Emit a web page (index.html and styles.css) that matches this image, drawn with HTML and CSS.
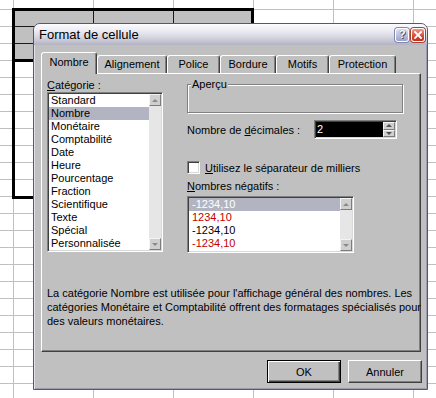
FILE: index.html
```html
<!DOCTYPE html>
<html lang="fr">
<head>
<meta charset="utf-8">
<title>Format de cellule</title>
<link rel="stylesheet" href="styles.css">
</head>
<body>
<div class="sel sel-shaded"></div>
<div class="sel sel-range"></div>

<div class="dialog">
  <div class="titlebar">
    <span class="title">Format de cellule</span>
    <div class="caption-buttons">
      <span class="cap-btn cap-help">?</span>
      <span class="cap-btn cap-close"><svg width="8" height="8" viewBox="0 0 8 8"><path d="M1 1L7 7M7 1L1 7" stroke="#fff" stroke-width="1.8" stroke-linecap="square"/></svg></span>
    </div>
  </div>
  <div class="client">
    <div class="tabs">
      <div class="tab tab-nombre active">Nombre</div>
      <div class="tab tab-align">Alignement</div>
      <div class="tab tab-police">Police</div>
      <div class="tab tab-bordure">Bordure</div>
      <div class="tab tab-motifs">Motifs</div>
      <div class="tab tab-protect">Protection</div>
    </div>
    <div class="panel">
      <div class="columns">
        <div class="col-left">
          <div class="label"><u>C</u>atégorie :</div>
          <div class="listbox list-cat">
            <ul class="items">
              <li>Standard</li>
              <li class="selected">Nombre</li>
              <li>Monétaire</li>
              <li>Comptabilité</li>
              <li>Date</li>
              <li>Heure</li>
              <li>Pourcentage</li>
              <li>Fraction</li>
              <li>Scientifique</li>
              <li>Texte</li>
              <li>Spécial</li>
              <li>Personnalisée</li>
            </ul>
            <div class="vscroll">
              <span class="sb-btn sb-up"></span>
              <span class="sb-track"></span>
              <span class="sb-btn sb-down"></span>
            </div>
          </div>
        </div>
        <div class="col-right">
          <div class="groupbox"><span class="legend">Aperçu</span></div>
          <div class="dec-row">
            <span>Nombre de <u>d</u>écimales :</span>
            <div class="spin">
              <div class="spin-field">2</div>
              <div class="spin-btns">
                <span class="spin-btn spin-up"></span>
                <span class="spin-btn spin-down"></span>
              </div>
            </div>
          </div>
          <div class="check-row">
            <span class="checkbox"></span>
            <span><u>U</u>tilisez le séparateur de milliers</span>
          </div>
          <div class="label neg-label"><u>N</u>ombres négatifs :</div>
          <div class="listbox list-neg">
            <ul class="items">
              <li class="selected sel-white">-1234,10</li>
              <li class="red">1234,10</li>
              <li>-1234,10</li>
              <li class="red">-1234,10</li>
            </ul>
            <div class="vscroll">
              <span class="sb-btn sb-up"></span>
              <span class="sb-track"></span>
              <span class="sb-btn sb-down"></span>
            </div>
          </div>
        </div>
      </div>
      <p class="desc">La catégorie Nombre est utilisée pour l'affichage général des nombres. Les<br>catégories Monétaire et Comptabilité offrent des formatages spécialisés pour<br>des valeurs monétaires.</p>
    </div>
    <div class="buttons">
      <button class="btn btn-default">OK</button>
      <button class="btn">Annuler</button>
    </div>
  </div>
</div>
</body>
</html>
```

FILE: styles.css
```css
* { box-sizing: border-box; }

html, body { margin: 0; padding: 0; }

body {
  width: 436px;
  height: 398px;
  overflow: hidden;
  position: relative;
  background-color: #fff;
  background-image:
    linear-gradient(to right, #c0c0c0 1px, transparent 1px),
    linear-gradient(to bottom, #c0c0c0 1px, transparent 1px);
  background-size: 80px 17px;
  background-position: 13px 9px;
  font-family: "Liberation Sans", Arial, sans-serif;
  font-size: 11px;
  color: #000;
}

/* spreadsheet selection overlays */
.sel {
  position: absolute;
  border: 3px solid #000;
}
.sel-shaded {
  left: 12px;
  top: 8px;
  width: 242px;
  height: 54px;
  background-color: #c0c0c0;
  background-image:
    linear-gradient(to right, #1a1a1a 1px, transparent 1px),
    linear-gradient(to bottom, #1a1a1a 1px, transparent 1px);
  background-size: 80px 17px;
  background-position: 78px 15px;
}
.sel-range {
  left: 12px;
  top: 59px;
  width: 242px;
  height: 140px;
}

/* dialog window */
.dialog {
  position: absolute;
  left: 33px;
  top: 23px;
  width: 395px;
  height: 367px;
  background: #c0c0c0;
  border: 1px solid #58586c;
  border-radius: 7px 7px 0 0;
  display: flex;
  flex-direction: column;
  box-shadow: inset 1px 0 0 #e2e2ea, inset -1px 0 0 #9c9cac, inset 0 -1px 0 #9c9cac;
}

.titlebar {
  flex: none;
  height: 21px;
  display: flex;
  align-items: center;
  justify-content: space-between;
  padding: 0 2px 0 5px;
  border-radius: 6px 6px 0 0;
  background: linear-gradient(#fdfdff 0%, #f0f0f5 25%, #dcdce6 55%, #c6c6d4 80%, #b2b2c4 100%);
}
.title {
  font-size: 13px;
  color: #000;
}
.caption-buttons {
  display: flex;
  gap: 2px;
}
.cap-btn {
  width: 14px;
  height: 14px;
  border-radius: 3px;
  border: 1px solid #fff;
  display: flex;
  align-items: center;
  justify-content: center;
}
.cap-help {
  background: linear-gradient(#dfe2f2, #9ba2c8);
  color: #fff;
  font-weight: bold;
  font-size: 11px;
  line-height: 1;
  text-shadow: 0 0 1px #4a5080, 1px 1px 0 #4a5080;
  box-shadow: 0 0 0 1px #8088b0;
}
.cap-close {
  background: linear-gradient(#ee9a88, #d24a36 60%, #c0301e);
  box-shadow: 0 0 0 1px #a84030;
}

.client {
  flex: 1;
  padding: 7px 5px 0 7px;
  display: flex;
  flex-direction: column;
}

/* tabs */
.tabs {
  display: flex;
  align-items: flex-end;
  height: 21px;
}
.tab {
  height: 18px;
  display: flex;
  align-items: center;
  justify-content: center;
  background: #c0c0c0;
  border-top: 1px solid #fff;
  border-left: 1px solid #fff;
  border-right: 1px solid #404040;
  border-radius: 3px 3px 0 0;
  box-shadow: inset -1px 0 0 #808080;
  padding-bottom: 1px;
}
.tab.active {
  height: 22px;
  margin-bottom: -1px;
  position: relative;
  z-index: 1;
  padding-bottom: 3px;
}
.tab-nombre { width: 56px; }
.tab-align { width: 70px; }
.tab-police { width: 53px; }
.tab-bordure { width: 56px; }
.tab-motifs { width: 53px; }
.tab-protect { width: 67px; }

.panel {
  width: 380px;
  height: 279px;
  flex: none;
  border-top: 1px solid #fff;
  border-left: 1px solid #fff;
  border-right: 1px solid #404040;
  border-bottom: 1px solid #404040;
  box-shadow: inset -1px -1px 0 #808080;
  padding: 5px 0 0 5px;
}

.columns {
  display: flex;
  gap: 24px;
}
.col-left {
  width: 116px;
}
.col-right {
  width: 216px;
  padding-top: 5px;
  display: flex;
  flex-direction: column;
}

.label {
  height: 13px;
  line-height: 13px;
  white-space: nowrap;
}

/* list boxes */
.listbox {
  display: flex;
  background: #fff;
  border: 1px solid;
  border-color: #808080 #fff #fff #808080;
  padding: 1px;
  box-shadow: inset 1px 1px 0 #404040, inset -1px -1px 0 #d8d8d8;
  overflow: hidden;
}
.list-cat {
  height: 160px;
}
.list-neg {
  width: 167px;
  height: 57px;
  margin-top: 3px;
}
.items {
  flex: 1;
  list-style: none;
  margin: 0;
  padding: 0;
  overflow: hidden;
}
.items li {
  height: 13px;
  line-height: 13px;
  padding-left: 2px;
  white-space: nowrap;
}
.list-neg .items li { padding-left: 3px; }
.items li.selected { background: #b3b4c1; }
.items li.sel-white { color: #fff; }
.items li.red { color: #c40000; }

.vscroll {
  width: 12px;
  flex: none;
  display: flex;
  flex-direction: column;
}
.sb-track {
  flex: 1;
  background: #e6e6e6;
}
.sb-btn {
  height: 12px;
  flex: none;
  background: #cfcfcf;
  border: 1px solid;
  border-color: #f4f4f4 #7c7c7c #7c7c7c #f4f4f4;
  display: flex;
  align-items: center;
  justify-content: center;
}
.sb-btn::after {
  content: "";
  width: 0;
  height: 0;
  border-left: 3px solid transparent;
  border-right: 3px solid transparent;
}
.sb-up::after { border-bottom: 3px solid #8a8a8a; }
.sb-down::after { border-top: 3px solid #8a8a8a; }

/* group box */
.groupbox {
  position: relative;
  height: 29px;
  border: 1px solid #808080;
  box-shadow: inset 1px 1px 0 #fff, 1px 1px 0 #fff;
}
.legend {
  position: absolute;
  left: 3px;
  top: -7px;
  line-height: 13px;
  padding: 0 1px;
  background: #c0c0c0;
}

/* decimals row */
.dec-row {
  margin-top: 7px;
  height: 19px;
  display: flex;
  align-items: center;
  white-space: nowrap;
}
.spin {
  margin-left: auto;
  margin-right: 6px;
  width: 83px;
  height: 19px;
  display: flex;
  border: 1px solid;
  border-color: #808080 #fff #fff #808080;
  padding: 1px;
  box-shadow: inset 1px 1px 0 #404040, inset -1px -1px 0 #d8d8d8;
  background: #fff;
}
.spin-field {
  flex: 1;
  background: #000;
  color: #fff;
  line-height: 15px;
  padding-left: 1px;
}
.spin-btns {
  width: 12px;
  display: flex;
  flex-direction: column;
}
.spin-btn {
  flex: 1;
  background: #cfcfcf;
  border: 1px solid;
  border-color: #f4f4f4 #7c7c7c #7c7c7c #f4f4f4;
  display: flex;
  align-items: center;
  justify-content: center;
}
.spin-btn::after {
  content: "";
  width: 0;
  height: 0;
  border-left: 3px solid transparent;
  border-right: 3px solid transparent;
}
.spin-up::after { border-bottom: 3px solid #505050; }
.spin-down::after { border-top: 3px solid #505050; }

/* checkbox */
.check-row {
  margin-top: 22px;
  height: 13px;
  display: flex;
  align-items: center;
  gap: 5px;
  white-space: nowrap;
}
.checkbox {
  width: 13px;
  height: 13px;
  flex: none;
  background: #fff;
  border: 1px solid;
  border-color: #808080 #fff #fff #808080;
  box-shadow: inset 1px 1px 0 #404040, inset -1px -1px 0 #d8d8d8;
}

.neg-label {
  margin-top: 6px;
}

/* description */
.desc {
  margin: 33px 0 0 0;
  line-height: 14px;
  white-space: nowrap;
}

/* buttons */
.buttons {
  margin-top: 8px;
  display: flex;
  justify-content: flex-end;
  gap: 7px;
}
.btn {
  width: 74px;
  height: 23px;
  font-family: "Liberation Sans", Arial, sans-serif;
  font-size: 11px;
  color: #000;
  background: #c0c0c0;
  border: 1px solid;
  border-color: #fff #404040 #404040 #fff;
  box-shadow: inset -1px -1px 0 #808080;
  padding: 0;
  margin: 0;
}
.btn-default {
  border: 1px solid #000;
  box-shadow: inset 1px 1px 0 #fff, inset -1px -1px 0 #404040, inset -2px -2px 0 #808080;
}
```
